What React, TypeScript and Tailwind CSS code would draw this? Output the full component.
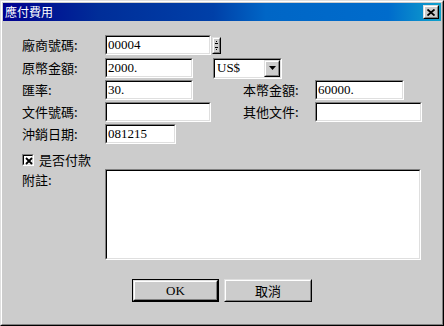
const cjk = "font-['Noto_Sans_CJK_TC',sans-serif]";
const serif = "font-['Liberation_Serif','Noto_Sans_CJK_TC',serif]";

function Sunken({ className, children }: { className?: string; children?: React.ReactNode }) {
  return (
    <div className={`border border-t-[#808080] border-l-[#808080] border-b-white border-r-white ${className ?? ''}`}>
      <div className="h-full w-full border border-t-black border-l-black border-b-[#dfdfdf] border-r-[#dfdfdf] bg-white">
        {children}
      </div>
    </div>
  );
}

function Field({ w, value }: { w: string; value?: string }) {
  return (
    <Sunken className={`${w} h-[20px]`}>
      <div className={`${serif} pl-[1px] text-[13px] leading-[16px] text-black`}>{value}</div>
    </Sunken>
  );
}

function Raised({ className, children }: { className?: string; children?: React.ReactNode }) {
  return (
    <div className={`border border-t-[#dfdfdf] border-l-[#dfdfdf] border-b-black border-r-black ${className ?? ''}`}>
      <div className="flex h-full w-full items-center justify-center border border-t-white border-l-white border-b-[#808080] border-r-[#808080] bg-[#cccccc]">
        {children}
      </div>
    </div>
  );
}

function Label({ w, text }: { w: string; text: string }) {
  return <div className={`${cjk} ${w} shrink-0 text-[13px] leading-[20px] text-black`}>{text}</div>;
}

export default function App() {
  return (
    <div className="h-[326px] w-[444px] border border-t-[#dfdfdf] border-l-[#dfdfdf] border-b-black border-r-black">
      <div className="h-full w-full border border-t-white border-l-white border-b-[#808080] border-r-[#808080] bg-[#cccccc] p-[1px]">
        {/* title bar */}
        <div className="flex h-[18px] items-center justify-between bg-[linear-gradient(to_right,#00008f_0%,#002e99_22%,#0040a8_48%,#0066c6_60%,#006ccc_88%,#10a2cc_100%)] pl-[2px] pr-[2px]">
          <span className={`${cjk} text-[12px] leading-[18px] text-white`}>應付費用</span>
          <Raised className="h-[14px] w-[16px]">
            <svg width="8" height="7" viewBox="0 0 8 7">
              <path d="M0.5 0.5 L7.5 6.5 M7.5 0.5 L0.5 6.5" stroke="black" strokeWidth="1.8" />
            </svg>
          </Raised>
        </div>

        <div className="pl-[19px]">
          <div className="mt-[14px] flex h-[20px] items-center">
            <Label w="w-[83px]" text="廠商號碼:" />
            <Field w="w-[106px]" value="00004" />
            <Raised className="ml-[1px] h-[17px] w-[9px]">
              <svg width="5" height="11" viewBox="0 0 5 11">
                <path d="M2 1 L3 1 L3 2 L2 2 Z M1 3 L4 3 L4 4 L1 4 Z M1 7 L4 7 L4 8 L1 8 Z M2 9 L3 9 L3 10 L2 10 Z" fill="black" />
              </svg>
            </Raised>
          </div>

          <div className="mt-[3px] flex h-[20px] items-center">
            <Label w="w-[83px]" text="原幣金額:" />
            <Field w="w-[88px]" value="2000." />
            <Sunken className="ml-[20px] h-[21px] w-[69px]">
              <div className="flex h-full items-center justify-between">
                <span className={`${serif} pl-[2px] text-[13px] leading-[16px] text-black`}>US$</span>
                <Raised className="h-[17px] w-[16px]">
                  <svg width="7" height="4" viewBox="0 0 7 4">
                    <path d="M0 0 L7 0 L3.5 4 Z" fill="black" />
                  </svg>
                </Raised>
              </div>
            </Sunken>
          </div>

          <div className="mt-[2px] flex h-[20px] items-center">
            <Label w="w-[83px]" text="匯率:" />
            <Field w="w-[88px]" value="30." />
            <div className="ml-[50px] flex items-center">
              <Label w="w-[72px]" text="本幣金額:" />
              <Field w="w-[89px]" value="60000." />
            </div>
          </div>

          <div className="mt-[2px] flex h-[20px] items-center">
            <Label w="w-[83px]" text="文件號碼:" />
            <Field w="w-[106px]" />
            <div className="ml-[32px] flex items-center">
              <Label w="w-[72px]" text="其他文件:" />
              <Field w="w-[107px]" />
            </div>
          </div>

          <div className="mt-[2px] flex h-[20px] items-center">
            <Label w="w-[83px]" text="沖銷日期:" />
            <Field w="w-[71px]" value="081215" />
          </div>

          <div className="mt-[9px] flex h-[13px] items-center">
            <Sunken className="h-[12px] w-[12px]">
              <svg width="10" height="10" viewBox="0 0 10 10">
                <path d="M2 2 L8 8 M8 2 L2 8" stroke="black" strokeWidth="1.8" />
              </svg>
            </Sunken>
            <span className={`${cjk} ml-[5px] text-[13px] leading-[20px] text-black`}>是否付款</span>
          </div>

          <div className="mt-[3px] flex items-start">
            <div className="pt-[1px]">
              <Label w="w-[83px]" text="附註:" />
            </div>
            <Sunken className="h-[91px] w-[316px]" />
          </div>

          <div className="mt-[19px] flex items-center pl-[110px]">
            <div className="h-[23px] w-[87px] border border-black">
              <Raised className="h-full w-full">
                <span className={`${serif} text-[13px] leading-[16px] text-black`}>OK</span>
              </Raised>
            </div>
            <Raised className="ml-[5px] h-[23px] w-[88px]">
              <span className={`${cjk} text-[13px] leading-[16px] text-black`}>取消</span>
            </Raised>
          </div>
        </div>
      </div>
    </div>
  );
}
